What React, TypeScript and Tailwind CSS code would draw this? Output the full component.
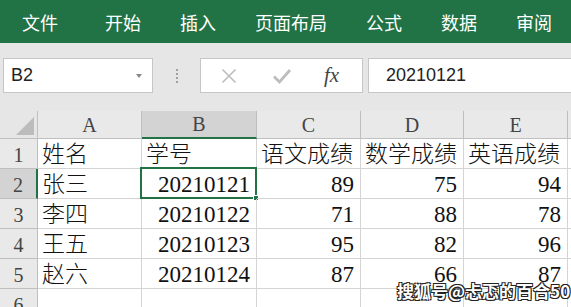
import React from 'react'

const tabs = ['文件', '开始', '插入', '页面布局', '公式', '数据', '审阅']

const cols = ['A', 'B', 'C', 'D', 'E']

const rows: (string | number)[][] = [
  ['姓名', '学号', '语文成绩', '数学成绩', '英语成绩'],
  ['张三', 20210121, 89, 75, 94],
  ['李四', 20210122, 71, 88, 78],
  ['王五', 20210123, 95, 82, 96],
  ['赵六', 20210124, 87, 66, 87],
  ['', '', '', '', ''],
]

const cellFont = "font-['Liberation_Serif','Noto_Sans_CJK_SC',serif]"

function CheckIcon() {
  return (
    <svg width="20" height="16" viewBox="0 0 20 16">
      <path d="M2 8.5 L7.5 14 L18 2" fill="none" stroke="#bdbdbd" strokeWidth="2.8" />
    </svg>
  )
}

function CrossIcon() {
  return (
    <svg width="16" height="16" viewBox="0 0 16 16">
      <path d="M1.5 1.5 L14.5 14.5 M14.5 1.5 L1.5 14.5" stroke="#bdbdbd" strokeWidth="1.6" />
    </svg>
  )
}

export default function App() {
  return (
    <div className="relative h-[307px] w-[571px] overflow-hidden bg-[#e6e6e6] font-['Noto_Sans_CJK_SC',sans-serif]">
      {/* ribbon tabs */}
      <div className="flex h-[43px] items-center gap-[39px] bg-[#217346] pl-[22px] text-[18px] leading-none text-white">
        {tabs.map((t, i) => (
          <span key={t} className={i === 0 ? 'mr-[8px]' : ''}>
            {t}
          </span>
        ))}
      </div>

      {/* formula bar */}
      <div className="mt-[15px] flex h-[35px] items-stretch">
        <div className="ml-[3px] flex w-[150px] items-center justify-between border border-[#c6c6c6] bg-white pl-[7px] pr-[10px]">
          <span className="font-['Liberation_Sans',sans-serif] text-[18px] text-[#222]">B2</span>
          <span className="h-0 w-0 border-x-[3.5px] border-t-[4px] border-x-transparent border-t-[#8a8a8a]" />
        </div>
        <div className="flex w-[47px] flex-col items-center justify-center gap-[2px]">
          {[0, 1, 2, 3].map((d) => (
            <span key={d} className="h-[2px] w-[2px] bg-[#a0a0a0]" />
          ))}
        </div>
        <div className="flex w-[163px] items-center border border-[#c6c6c6] bg-white">
          <span className="ml-[20px] flex w-[16px] justify-center">
            <CrossIcon />
          </span>
          <span className="ml-[35px] flex w-[20px] justify-center">
            <CheckIcon />
          </span>
          <span className="ml-[32px] font-['Liberation_Serif',serif] text-[21px] italic leading-none text-[#444]">
            fx
          </span>
        </div>
        <div className="ml-[5px] flex flex-1 items-center border border-r-0 border-[#c6c6c6] bg-white pl-[17px]">
          <span className="font-['Liberation_Sans',sans-serif] text-[18px] text-[#222]">20210121</span>
        </div>
      </div>

      {/* sheet grid */}
      <div className="mt-[18px] grid grid-cols-[38px_104px_115px_104px_103px_104px_1fr] bg-white">
        {/* header row */}
        <div className="relative h-[28px] border-b border-r border-[#bfbfbf] bg-[#e6e6e6]">
          <span className="absolute bottom-[3px] right-[3px] h-0 w-0 border-b-[18px] border-l-[18px] border-b-[#bcbcbc] border-l-transparent" />
        </div>
        {cols.map((c) => (
          <div
            key={c}
            className={`flex h-[28px] items-center justify-center border-r border-[#bfbfbf] text-[20px] text-[#444] ${cellFont} ${
              c === 'B' ? 'border-b-2 border-b-[#217346] bg-[#d3d3d3]' : 'border-b bg-[#e9e9e9]'
            }`}
          >
            {c}
          </div>
        ))}
        <div className="h-[28px] border-b border-[#bfbfbf] bg-[#e9e9e9]" />

        {rows.map((r, ri) => {
          const n = ri + 1
          return (
            <React.Fragment key={n}>
              <div
                className={`flex h-[30px] items-center justify-center border-b border-[#bfbfbf] pt-[2px] text-[20px] text-[#444] ${cellFont} ${
                  n === 2 ? 'border-r-2 border-r-[#217346] bg-[#d3d3d3]' : 'border-r bg-[#e9e9e9]'
                }`}
              >
                {n}
              </div>
              {r.map((v, ci) => {
                const num = typeof v === 'number'
                const selected = n === 2 && ci === 1
                return (
                  <div
                    key={ci}
                    className={`relative flex h-[30px] items-center border-b border-r border-[#d4d4d4] pt-[2px] text-[23px] leading-none text-[#111] ${cellFont} ${
                      num ? 'justify-end pr-[6px]' : 'justify-start pl-[4px] font-light'
                    }`}
                  >
                    {v}
                    {selected && (
                      <span className="absolute left-[-2px] top-[-2px] h-[32px] w-[117px] border-2 border-[#217346]">
                        <span className="absolute bottom-[-4px] right-[-4px] h-[6px] w-[6px] border border-white bg-[#217346]" />
                      </span>
                    )}
                  </div>
                )
              })}
              <div className="h-[30px] border-b border-[#d4d4d4]" />
            </React.Fragment>
          )
        })}
      </div>

      {/* watermark */}
      <div className="absolute left-[397px] top-[282px] whitespace-nowrap text-[17px] font-bold leading-none text-white [text-shadow:-1px_-1px_0_#222,1px_-1px_0_#222,-1px_1px_0_#222,1px_1px_0_#222]">
        搜狐号@忐忑的百合50
      </div>
    </div>
  )
}
